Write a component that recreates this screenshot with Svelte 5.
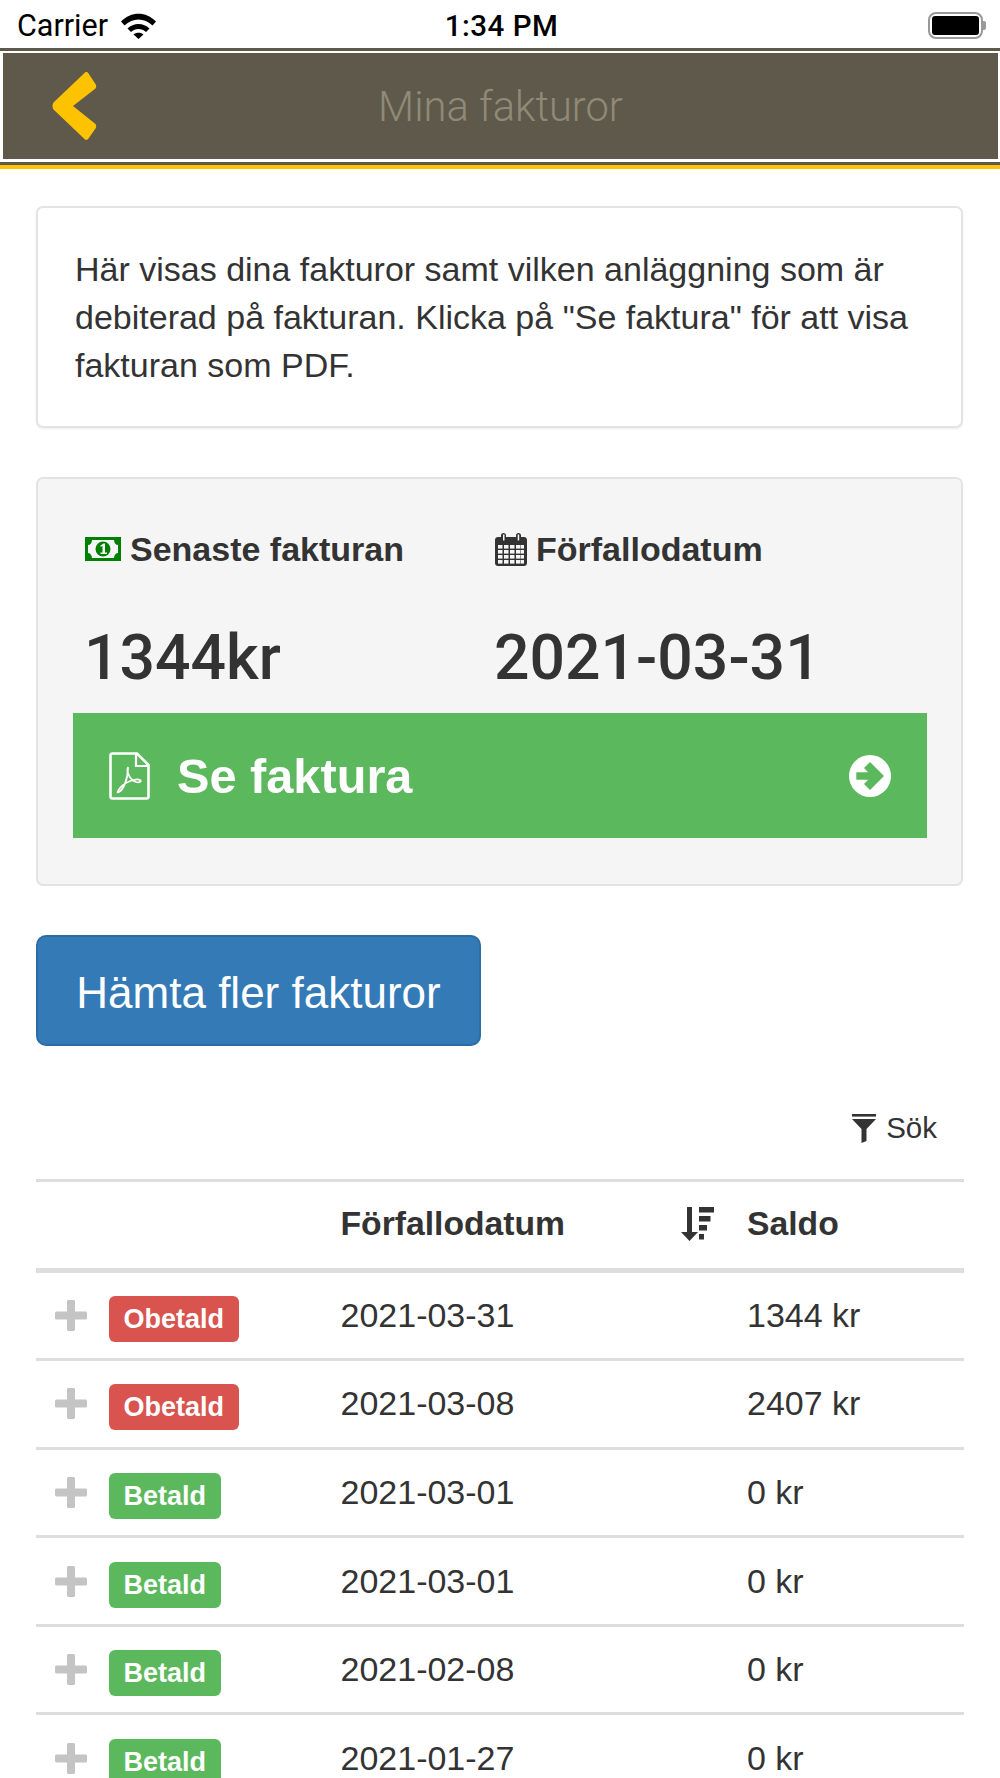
<script>
	const invoices = [
		{ status: 'Obetald', date: '2021-03-31', saldo: '1344 kr' },
		{ status: 'Obetald', date: '2021-03-08', saldo: '2407 kr' },
		{ status: 'Betald', date: '2021-03-01', saldo: '0 kr' },
		{ status: 'Betald', date: '2021-03-01', saldo: '0 kr' },
		{ status: 'Betald', date: '2021-02-08', saldo: '0 kr' },
		{ status: 'Betald', date: '2021-01-27', saldo: '0 kr' }
	];
</script>

<div class="page">
	<div class="statusbar">
		<div class="carrier">
			<span>Carrier</span>
			<svg width="37" height="27" viewBox="0 0 37 27">
				<path d="M1 9.5C11 -1 26 -1 36 9.5L32.5 13.5C24.5 5.5 12.5 5.5 4.5 13.5Z" fill="#000" />
				<path d="M7.5 16.5C13.5 10.5 23.5 10.5 29.5 16.5L26 20C22 16 15 16 11 20Z" fill="#000" />
				<path d="M13.5 22.5C16 20 21 20 23.5 22.5L18.5 27Z" fill="#000" />
			</svg>
		</div>
		<div class="clock">1:34 PM</div>
		<div class="battery">
			<div class="battery-body"><div class="battery-fill"></div></div>
			<div class="battery-cap"></div>
		</div>
	</div>

	<div class="navwrap">
		<div class="navbar">
			<svg class="back" width="46" height="68" viewBox="0 0 46 68">
				<path d="M33 0.5C34 -0.3 35.5 0 36.5 1.5L43.5 12C44.5 13.5 44.5 15 43.5 16.5L21 34L43.5 52C44.5 53.5 44.5 55 43.5 56.5L36.5 66.5C35.5 68 34 68.3 33 67.5L2 38C0 36 0 32 2 30Z" fill="#fdc300" />
			</svg>
			<span class="title">Mina fakturor</span>
		</div>
	</div>

	<div class="content">
		<div class="panel">
			Här visas dina fakturor samt vilken anläggning som är debiterad på fakturan. Klicka på "Se faktura" för att visa fakturan som PDF.
		</div>

		<div class="well">
			<div class="summary">
				<div class="summary-col">
					<h4>
						<svg width="36" height="24" viewBox="0 0 36 24">
							<rect width="36" height="24" fill="#008000" />
							<path d="M7 3H29C29 6 31 8 33 8V16C31 16 29 18 29 21H7C7 18 5 16 3 16V8C5 8 7 6 7 3Z" fill="#f5f5f5" />
							<circle cx="18" cy="12" r="7.5" fill="#008000" />
							<path d="M15.5 8.5L18.5 6.5H20V15.5H22V17H15.5V15.5H17.5V9L15.5 10Z" fill="#f5f5f5" />
						</svg>
						Senaste fakturan
					</h4>
					<div class="big">1344kr</div>
				</div>
				<div class="summary-col">
					<h4>
						<svg width="32" height="33" viewBox="0 0 32 33">
							<path d="M3 4H6V2.5C6 1 7 0 8.5 0S11 1 11 2.5V4H21V2.5C21 1 22 0 23.5 0S26 1 26 2.5V4H29C30.7 4 32 5.3 32 7V30C32 31.7 30.7 33 29 33H3C1.3 33 0 31.7 0 30V7C0 5.3 1.3 4 3 4Z" fill="#333" />
							<g fill="#f5f5f5">
								<rect x="8" y="1.5" width="1.5" height="6" /><rect x="22.7" y="1.5" width="1.5" height="6" />
								{#each [3, 9, 15, 21, 26] as x}
									{#each [12, 17, 22, 27] as y}
										<rect {x} {y} width={x === 26 ? 3 : 4.5} height="3.6" />
									{/each}
								{/each}
							</g>
						</svg>
						Förfallodatum
					</h4>
					<div class="big">2021-03-31</div>
				</div>
			</div>
			<div class="see-invoice">
				<svg width="41" height="48" viewBox="0 0 41 48" fill="none" stroke="#fff">
					<path d="M28 1.5H3.5C2.4 1.5 1.5 2.4 1.5 3.5V44.5C1.5 45.6 2.4 46.5 3.5 46.5H37.5C38.6 46.5 39.5 45.6 39.5 44.5V13Z" stroke-width="2.6" />
					<path d="M27 2V14H39.5" stroke-width="2.2" />
					<path d="M19 15C17 20 21 28 27 30C31 31 33 29 31 28C27 26 16 30 11 36C8 40 8 41 10 40C14 38 19 28 19 15Z" stroke-width="1.8" />
				</svg>
				<span class="see-label">Se faktura</span>
				<svg class="go" width="42" height="42" viewBox="0 0 42 42">
					<circle cx="21" cy="21" r="21" fill="#fff" />
					<path d="M8 18H21L16 13L21 8L34 21L21 34L16 29L21 24H8Z" fill="#5cb85c" stroke="#5cb85c" stroke-width="1.5" stroke-linejoin="round" />
				</svg>
			</div>
		</div>

		<button class="more">Hämta fler fakturor</button>

		<div class="search">
			<svg width="25" height="29" viewBox="0 0 25 29" fill="#333">
				<rect width="24" height="2.6" />
				<path d="M0 5H24L14.5 15V27L9.5 29V15Z" />
			</svg>
			<span>Sök</span>
		</div>

		<div class="table">
			<div class="row head">
				<div></div>
				<div class="th-date">
					<span>Förfallodatum</span>
					<svg width="34" height="34" viewBox="0 0 34 34" fill="#333">
						<path d="M7 0H12V25H18L9.5 34L1 25H7Z" />
						<rect x="19" y="0" width="15" height="5.5" />
						<rect x="19" y="9" width="11.5" height="5.5" />
						<rect x="19" y="18" width="8" height="5.5" />
						<rect x="19" y="27" width="5" height="5.5" />
					</svg>
				</div>
				<div>Saldo</div>
			</div>
			{#each invoices as inv}
				<div class="row">
					<div class="status">
						<svg width="32" height="31" viewBox="0 0 32 31" fill="#c4c4c4">
							<path d="M12 1.5C12 .7 12.7 0 13.5 0H18.5C19.3 0 20 .7 20 1.5V11.5H30.5C31.3 11.5 32 12.2 32 13V18C32 18.8 31.3 19.5 30.5 19.5H20V29.5C20 30.3 19.3 31 18.5 31H13.5C12.7 31 12 30.3 12 29.5V19.5H1.5C.7 19.5 0 18.8 0 18V13C0 12.2 .7 11.5 1.5 11.5H12Z" />
						</svg>
						<span class="badge" class:unpaid={inv.status === 'Obetald'}>{inv.status}</span>
					</div>
					<div>{inv.date}</div>
					<div>{inv.saldo}</div>
				</div>
			{/each}
		</div>
	</div>
</div>

<style>
	:global(body) {
		margin: 0;
		background: #fff;
	}

	.page {
		width: 1000px;
		height: 1778px;
		overflow: hidden;
		font-family: 'Liberation Sans', Arial, sans-serif;
		color: #333;
	}

	.statusbar {
		box-sizing: border-box;
		height: 48px;
		display: grid;
		grid-template-columns: 1fr auto 1fr;
		align-items: center;
		padding: 3px 14px 0 17px;
		font-family: Roboto, sans-serif;
		font-size: 29.5px;
		color: #000;
	}

	.carrier {
		display: flex;
		align-items: center;
		gap: 12px;
	}

	.carrier span {
		font-size: 30.5px;
	}

	.clock {
		font-weight: 500;
		letter-spacing: 0.5px;
	}

	.battery {
		display: flex;
		align-items: center;
		justify-self: end;
	}

	.battery-body {
		width: 55px;
		height: 27px;
		box-sizing: border-box;
		border: 2px solid #999;
		border-radius: 8px;
		padding: 2px;
	}

	.battery-fill {
		height: 100%;
		background: #000;
		border-radius: 3px;
	}

	.battery-cap {
		width: 3px;
		height: 9px;
		background: #999;
		border-radius: 0 2px 2px 0;
	}

	.navwrap {
		border-top: 3px solid #5f594b;
		border-bottom: 3px solid #5f594b;
		box-shadow: 0 4px 0 #fdc300;
		padding: 2px 2px 3px 3px;
		margin-bottom: 4px;
	}

	.navbar {
		height: 106px;
		background: #5f594b;
		position: relative;
		display: flex;
		align-items: center;
		justify-content: center;
	}

	.back {
		position: absolute;
		left: 49px;
		top: 19px;
	}

	.title {
		font-family: Roboto, sans-serif;
		font-weight: 300;
		font-size: 41.7px;
		color: #8f8a78;
	}

	.content {
		padding: 37px 37px 0 36px;
	}

	.panel {
		box-sizing: border-box;
		height: 222px;
		padding: 37px 36px 0 37px;
		border: 2px solid #e4e4e4;
		border-radius: 7px;
		box-shadow: 0 1px 2px rgba(0, 0, 0, 0.08);
		font-size: 34px;
		line-height: 48px;
	}

	.well {
		box-sizing: border-box;
		height: 409px;
		margin-top: 49px;
		padding: 0 34px 0 35px;
		background: #f5f5f5;
		border: 2px solid #e3e3e3;
		border-radius: 7px;
	}

	.summary {
		display: flex;
		height: 234px;
	}

	.summary-col {
		width: 422px;
		padding-left: 12px;
		box-sizing: border-box;
	}

	.summary-col:last-child {
		width: auto;
		padding-left: 0;
	}

	h4 {
		margin: 52px 0 0;
		height: 36px;
		display: flex;
		align-items: center;
		gap: 9px;
		font-size: 34px;
		font-weight: bold;
	}

	.big {
		margin: 56px 0 0 -1px;
		font-family: Roboto, sans-serif;
		font-size: 62.5px;
		line-height: 70px;
		font-weight: 500;
	}

	.see-invoice {
		height: 125px;
		background: #5cb85c;
		display: flex;
		align-items: center;
		padding: 0 36px;
		color: #fff;
	}

	.see-label {
		margin-left: 27px;
		font-size: 48.7px;
		font-weight: bold;
	}

	.go {
		margin-left: auto;
	}

	.more {
		display: block;
		box-sizing: border-box;
		width: 445px;
		height: 111px;
		margin-top: 49px;
		padding: 4px 0 0;
		background: #337ab7;
		border: 2px solid #2e6da4;
		border-radius: 10px;
		color: #fff;
		font-family: inherit;
		font-size: 44px;
	}

	.search {
		display: flex;
		justify-content: flex-end;
		align-items: center;
		gap: 9px;
		height: 54px;
		margin-top: 55px;
		padding-right: 26px;
		font-size: 29.5px;
	}

	.table {
		margin: 24px -1px 0 0;
		border-top: 3px solid #ddd;
		font-size: 34px;
	}

	.row {
		box-sizing: border-box;
		height: 88.6px;
		display: grid;
		grid-template-columns: 304.5px 406.5px 1fr;
		align-items: center;
		border-bottom: 3px solid #ddd;
	}

	.head {
		height: 90.5px;
		padding-bottom: 2px;
		border-bottom-width: 5px;
		font-size: 33.7px;
		font-weight: bold;
	}

	.th-date {
		display: flex;
		align-items: center;
		justify-content: space-between;
		padding-right: 33px;
	}

	.status {
		display: flex;
		align-items: center;
		gap: 22px;
		padding-left: 19px;
	}

	.badge {
		box-sizing: border-box;
		height: 46px;
		line-height: 46px;
		padding: 0 14.5px;
		margin-top: 7px;
		border-radius: 6px;
		background: #5cb85c;
		color: #fff;
		font-size: 27px;
		font-weight: bold;
	}

	.unpaid {
		background: #d9534f;
	}
</style>
